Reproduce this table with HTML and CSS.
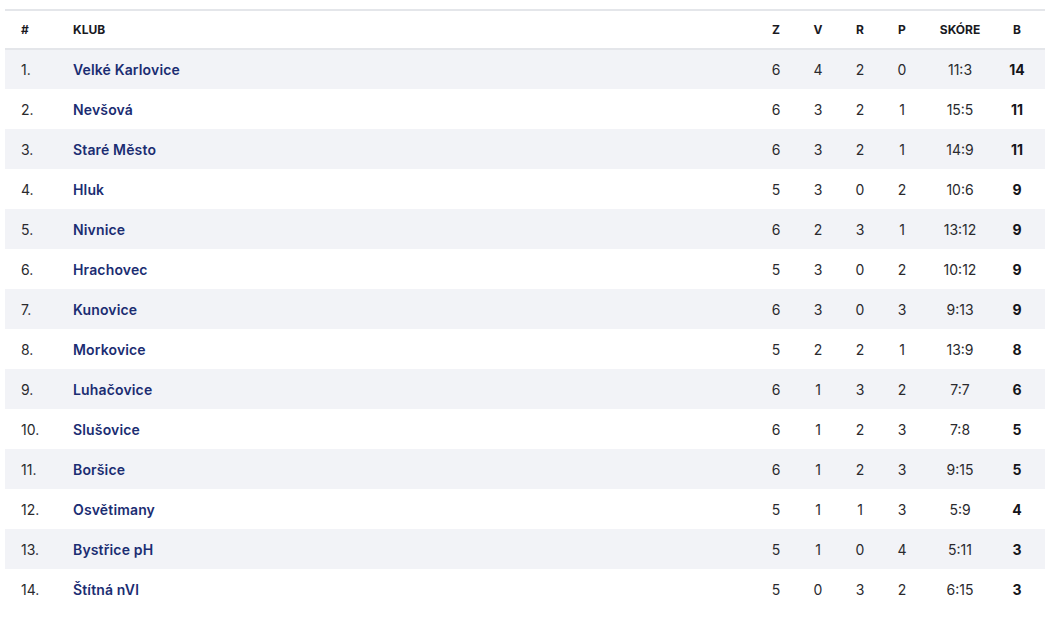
FILE: index.html
```html
<!DOCTYPE html>
<html lang="cs">
<head>
<meta charset="utf-8">
<link rel="stylesheet" href="styles.css">
</head>
<body>
<table class="standings">
  <colgroup>
    <col class="c-pos"><col class="c-club"><col class="c-n"><col class="c-n"><col class="c-n"><col class="c-n"><col class="c-score"><col class="c-pts">
  </colgroup>
  <thead>
    <tr><th class="left">#</th><th class="left">KLUB</th><th>Z</th><th>V</th><th>R</th><th>P</th><th>SKÓRE</th><th>B</th></tr>
  </thead>
  <tbody>
    <tr><td class="pos">1.</td><td class="club">Velké Karlovice</td><td>6</td><td>4</td><td>2</td><td>0</td><td>11:3</td><td class="pts">14</td></tr>
    <tr><td class="pos">2.</td><td class="club">Nevšová</td><td>6</td><td>3</td><td>2</td><td>1</td><td>15:5</td><td class="pts">11</td></tr>
    <tr><td class="pos">3.</td><td class="club">Staré Město</td><td>6</td><td>3</td><td>2</td><td>1</td><td>14:9</td><td class="pts">11</td></tr>
    <tr><td class="pos">4.</td><td class="club">Hluk</td><td>5</td><td>3</td><td>0</td><td>2</td><td>10:6</td><td class="pts">9</td></tr>
    <tr><td class="pos">5.</td><td class="club">Nivnice</td><td>6</td><td>2</td><td>3</td><td>1</td><td>13:12</td><td class="pts">9</td></tr>
    <tr><td class="pos">6.</td><td class="club">Hrachovec</td><td>5</td><td>3</td><td>0</td><td>2</td><td>10:12</td><td class="pts">9</td></tr>
    <tr><td class="pos">7.</td><td class="club">Kunovice</td><td>6</td><td>3</td><td>0</td><td>3</td><td>9:13</td><td class="pts">9</td></tr>
    <tr><td class="pos">8.</td><td class="club">Morkovice</td><td>5</td><td>2</td><td>2</td><td>1</td><td>13:9</td><td class="pts">8</td></tr>
    <tr><td class="pos">9.</td><td class="club">Luhačovice</td><td>6</td><td>1</td><td>3</td><td>2</td><td>7:7</td><td class="pts">6</td></tr>
    <tr><td class="pos">10.</td><td class="club">Slušovice</td><td>6</td><td>1</td><td>2</td><td>3</td><td>7:8</td><td class="pts">5</td></tr>
    <tr><td class="pos">11.</td><td class="club">Boršice</td><td>6</td><td>1</td><td>2</td><td>3</td><td>9:15</td><td class="pts">5</td></tr>
    <tr><td class="pos">12.</td><td class="club">Osvětimany</td><td>5</td><td>1</td><td>1</td><td>3</td><td>5:9</td><td class="pts">4</td></tr>
    <tr><td class="pos">13.</td><td class="club">Bystřice pH</td><td>5</td><td>1</td><td>0</td><td>4</td><td>5:11</td><td class="pts">3</td></tr>
    <tr><td class="pos">14.</td><td class="club">Štítná nVl</td><td>5</td><td>0</td><td>3</td><td>2</td><td>6:15</td><td class="pts">3</td></tr>
  </tbody>
</table>
</body>
</html>
```

FILE: styles.css
```css
html, body {
  margin: 0;
  padding: 0;
  background: #ffffff;
}
body {
  padding: 9px 8px 0 5px;
  font-family: Inter, "Noto Sans", sans-serif;
  color: #222226;
}
.standings {
  width: 1040px;
  border-collapse: collapse;
  table-layout: fixed;
  border-top: 2px solid #e4e6ea;
}
.c-pos { width: 52px; }
.c-club { width: 698px; }
.c-n { width: 42px; }
.c-score { width: 74px; }
.c-pts { width: 48px; }
thead tr {
  height: 39px;
  border-bottom: 2px solid #e4e6ea;
}
th {
  font-size: 12px;
  font-weight: 700;
  color: #1a1a1f;
  text-align: center;
  padding: 0;
}
th:last-child, td:last-child {
  padding-right: 8px;
}
th.left {
  text-align: left;
  padding-left: 16px;
}
tbody tr {
  height: 40px;
}
tbody tr:nth-child(odd) {
  background: #f2f3f7;
}
td {
  font-size: 14px;
  text-align: center;
  padding: 0;
  color: #2a2a2e;
}
td.pos {
  text-align: left;
  padding-left: 16px;
}
td.club {
  text-align: left;
  padding-left: 16px;
  font-weight: 600;
  letter-spacing: 0.15px;
  color: #1b2d72;
}
td.pts {
  font-weight: 700;
  color: #15151a;
}
```
